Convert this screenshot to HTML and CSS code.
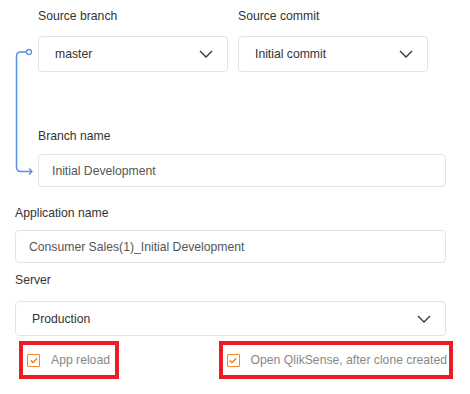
FILE: index.html
```html
<!DOCTYPE html>
<html lang="en">
<head>
    <meta charset="UTF-8">
    <title>Clone app</title>
    <link rel="stylesheet" href="styles.css">
</head>
<body>
    <div class="clone-form">
        <div class="tree">
            <div class="tree-line">
                <svg width="23" height="187" viewBox="0 0 23 187">
                    <circle cx="14" cy="52" r="2.5" fill="#fff" stroke="#5b8fe0" stroke-width="1.3"/>
                    <path d="M11.5 52 H5.5 Q1.5 52 1.5 56 V167 Q1.5 171.5 6 171.5 H17" fill="none" stroke="#5b8fe0" stroke-width="1.5"/>
                    <path d="M14 168.5 L17 171.5 L14 174.5" fill="none" stroke="#5b8fe0" stroke-width="1.3"/>
                </svg>
            </div>
            <div class="tree-content">
                <div class="row">
                    <div class="field half">
                        <label class="field-label">Source branch</label>
                        <div class="select tall">
                            <span>master</span>
                            <svg class="chevron" width="14" height="8" viewBox="0 0 14 8"><path d="M1 1 L7 7 L13 1" fill="none" stroke="#333" stroke-width="1.3"/></svg>
                        </div>
                    </div>
                    <div class="field half">
                        <label class="field-label">Source commit</label>
                        <div class="select tall">
                            <span>Initial commit</span>
                            <svg class="chevron" width="14" height="8" viewBox="0 0 14 8"><path d="M1 1 L7 7 L13 1" fill="none" stroke="#333" stroke-width="1.3"/></svg>
                        </div>
                    </div>
                </div>
                <div class="field branch">
                    <label class="field-label">Branch name</label>
                    <div class="input">Initial Development</div>
                </div>
            </div>
        </div>

        <div class="field app">
            <label class="field-label">Application name</label>
            <div class="input">Consumer Sales(1)_Initial Development</div>
        </div>

        <div class="field server">
            <label class="field-label">Server</label>
            <div class="select server-select">
                <span>Production</span>
                <svg class="chevron" width="14" height="8" viewBox="0 0 14 8"><path d="M1 1 L7 7 L13 1" fill="none" stroke="#333" stroke-width="1.3"/></svg>
            </div>
        </div>

        <div class="options">
            <label class="option">
                <span class="checkbox"><svg width="8" height="7" viewBox="0 0 8 7"><path d="M0.8 3.4 L3 5.6 L7.2 1.2" fill="none" stroke="#f0882a" stroke-width="1.5"/></svg></span>
                App reload
            </label>
            <label class="option">
                <span class="checkbox"><svg width="8" height="7" viewBox="0 0 8 7"><path d="M0.8 3.4 L3 5.6 L7.2 1.2" fill="none" stroke="#f0882a" stroke-width="1.5"/></svg></span>
                Open QlikSense, after clone created
            </label>
        </div>
    </div>
</body>
</html>
```

FILE: styles.css
```css
* {
    box-sizing: border-box;
    margin: 0;
    padding: 0;
}

body {
    font-family: 'Liberation Sans', Arial, sans-serif;
    font-size: 12.2px;
    color: #333;
    background: #fff;
    width: 470px;
    height: 394px;
    overflow: hidden;
}

.clone-form {
    padding: 0 24px 0 15px;
}

.tree {
    display: flex;
}

.tree-line {
    width: 23px;
    flex-shrink: 0;
}

.tree-line svg {
    display: block;
}

.tree-content {
    flex: 1;
    padding-top: 8px;
}

.row {
    display: flex;
    gap: 10px;
}

.half {
    width: 190px;
}

.field-label {
    display: block;
    line-height: 16px;
    color: #333;
}

.select,
.input {
    display: flex;
    align-items: center;
    border: 1px solid #e3e3e3;
    border-radius: 4px;
    background: #fff;
}

.select {
    justify-content: space-between;
    padding: 0 14px 0 16px;
    color: #333;
}

.tall {
    height: 36px;
    margin-top: 12px;
}

.input {
    height: 33px;
    padding-left: 13px;
    color: #555;
}

.branch {
    margin-top: 56px;
}

.branch .input {
    margin-top: 10px;
}

.app {
    margin-top: 18px;
}

.app .input {
    margin-top: 9px;
}

.server {
    margin-top: 9px;
}

.server-select {
    height: 35px;
    margin-top: 13px;
}

.chevron {
    display: block;
}

.options {
    display: flex;
    justify-content: space-between;
    margin-top: 5px;
    padding-left: 4px;
    margin-right: -7px;
}

.option {
    display: flex;
    align-items: center;
    gap: 11px;
    height: 38px;
    padding: 0 5px 0 4px;
    border: 4px solid #ec1c24;
    color: #888;
}

.option:last-child {
    padding-right: 2px;
}

.checkbox {
    display: flex;
    align-items: center;
    justify-content: center;
    width: 13px;
    height: 13px;
    border: 1.6px solid #f0882a;
    border-radius: 1px;
}

.checkbox svg {
    display: block;
}
```
